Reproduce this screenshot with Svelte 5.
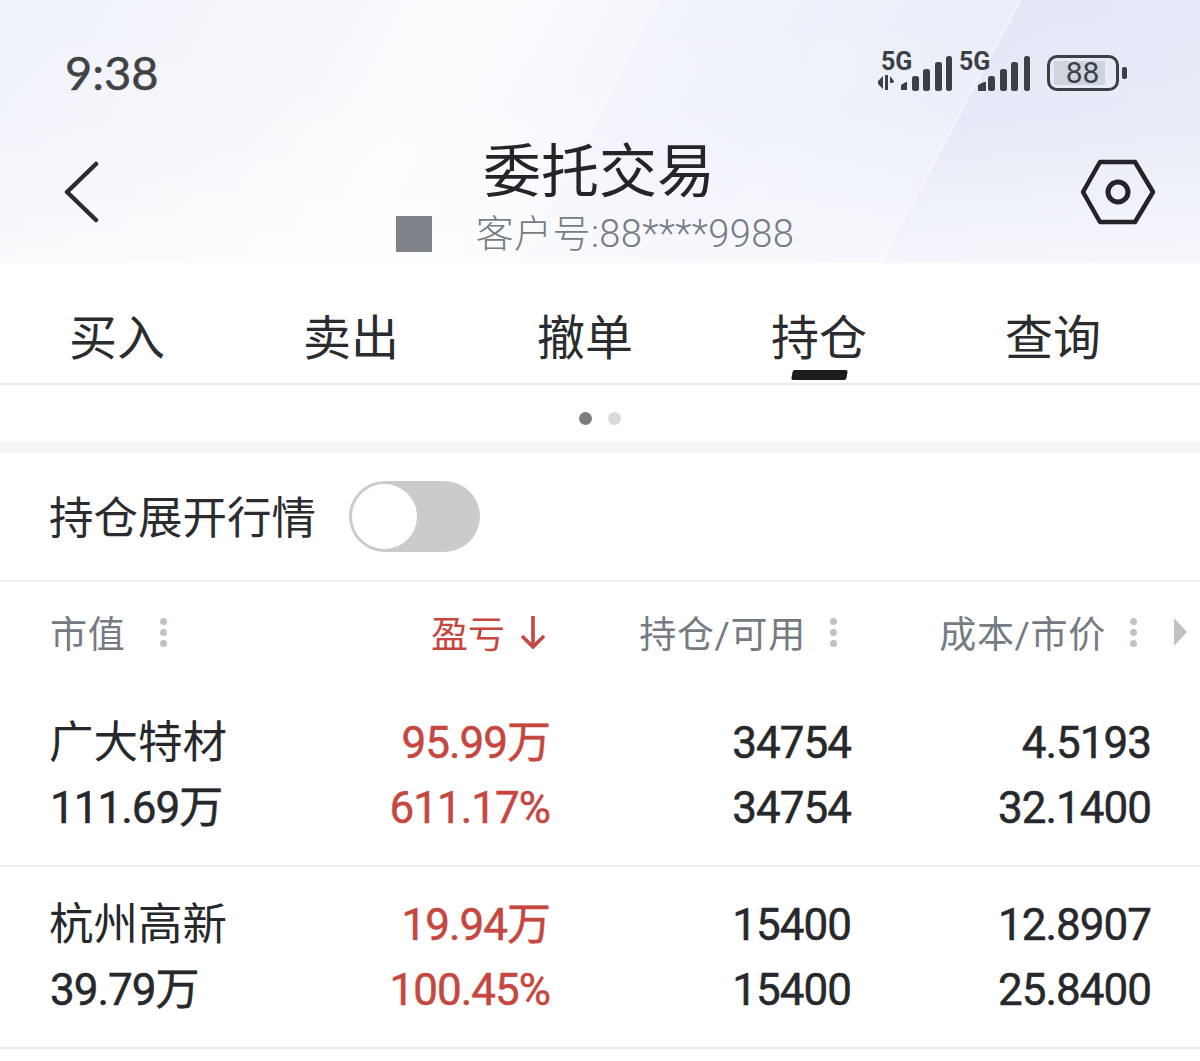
<script>
  const tabs = ['买入', '卖出', '撤单', '持仓', '查询'];
  const rows = [
    { name: '广大特材', value: '111.69万', pl: '95.99万', pct: '611.17%', pos: '34754', avail: '34754', cost: '4.5193', price: '32.1400' },
    { name: '杭州高新', value: '39.79万', pl: '19.94万', pct: '100.45%', pos: '15400', avail: '15400', cost: '12.8907', price: '25.8400' }
  ];
</script>

<div class="page">
  <header class="hero">
    <div class="status">
      <span class="time">9:38</span>
      <div class="status-icons">
        <svg class="sim a" width="78" height="64" viewBox="0 0 78 64">
          <text x="5" y="35" class="fiveg">5G</text>
          <g fill="#3c3f44">
            <path d="M2 47l5-5v13l-5-5zM9 41h3v15H9zM14 42l4 5-1 2h-3z" transform="translate(0 -1)" />
            <path d="M25 50l5-3h1v8h-6z" />
            <rect x="36" y="41" width="7" height="15" rx="2.5" />
            <rect x="47" y="34" width="7" height="22" rx="2.5" />
            <rect x="59" y="27" width="7" height="29" rx="2.5" />
            <rect x="70" y="21" width="6" height="35" rx="2.5" />
          </g>
        </svg>
        <svg class="sim b" width="74" height="64" viewBox="0 0 74 64">
          <text x="1" y="35" class="fiveg">5G</text>
          <g fill="#3c3f44">
            <path d="M20 50l6-3h2v9h-8z" />
            <rect x="30" y="41" width="7" height="15" rx="2.5" />
            <rect x="42" y="34" width="7" height="22" rx="2.5" />
            <rect x="53" y="27" width="7" height="29" rx="2.5" />
            <rect x="66" y="21" width="6" height="35" rx="2.5" />
          </g>
        </svg>
        <div class="battery">
          <div class="cell"><span class="level"></span><span class="pct">88</span></div>
          <span class="nub"></span>
        </div>
      </div>
    </div>

    <div class="nav">
      <svg class="back" width="40" height="64" viewBox="0 0 40 64" fill="none" stroke="#2a2c2f" stroke-width="4.5" stroke-linecap="round" stroke-linejoin="round">
        <path d="M32 3 L3 31 L32 59" />
      </svg>
      <div class="titles">
        <h1>委托交易</h1>
        <div class="account">
          <span class="mask"></span>
          <span>客户号:88****9988</span>
        </div>
      </div>
      <svg class="gear" width="76" height="68" viewBox="0 0 76 68" fill="none" stroke="#222427" stroke-width="4.5">
        <path d="M20 3 H55 L73 33 L55 63 H20 L3 33 Z" stroke-linejoin="round" />
        <circle cx="38" cy="33" r="10" stroke-width="5" />
      </svg>
    </div>
  </header>

  <nav class="tabs">
    {#each tabs as tab, i}
      <div class="tab" class:active={i === 3}>{tab}</div>
    {/each}
  </nav>

  <div class="dots"><span class="dot on"></span><span class="dot"></span></div>

  <div class="toggle-row">
    <span>持仓展开行情</span>
    <div class="switch"><span class="knob"></span></div>
  </div>

  <div class="table-head">
    <div class="hc first"><span>市值</span><span class="more"><i></i><i></i><i></i></span></div>
    <div class="hc sort">
      <span>盈亏</span>
      <svg width="26" height="36" viewBox="0 0 26 36" fill="none" stroke="#c5473f" stroke-width="3.6"><path d="M13 2 V33 M2 22 L13 33 L24 22" /></svg>
    </div>
    <div class="hc"><span>持仓/可用</span><span class="more"><i></i><i></i><i></i></span></div>
    <div class="hc"><span>成本/市价</span><span class="more"><i></i><i></i><i></i></span></div>
    <div class="tri"></div>
  </div>

  {#each rows as r, i}
    <div class="row" class:first={i === 0}>
      <div class="cell-l"><div class="name">{r.name}</div><div class="num">{r.value}</div></div>
      <div class="cell-r red"><div class="num">{r.pl}</div><div class="num">{r.pct}</div></div>
      <div class="cell-r"><div class="num">{r.pos}</div><div class="num">{r.avail}</div></div>
      <div class="cell-r"><div class="num">{r.cost}</div><div class="num">{r.price}</div></div>
    </div>
  {/each}
</div>

<style>
  :global(body) {
    margin: 0;
    background: #fff;
  }
  .page {
    width: 1200px;
    height: 1061px;
    overflow: hidden;
    background: #fff;
    color: #26282b;
    font-family: Roboto, "Noto Sans CJK SC", sans-serif;
  }
  .hero {
    height: 263px;
    box-sizing: border-box;
    padding: 45px 46px 0 64px;
    background:
      linear-gradient(180deg, rgba(255,255,255,0) 0, rgba(255,255,255,.1) 45%, rgba(255,255,255,.6) 100%),
      linear-gradient(118deg, #eef1f9 0, #f6f8fc 25%, #fbfcfe 35%, #f7f8fd 49.2%, #f2f4fb 49.4%, #edf0fa 62.7%, #eef1fa 62.9%, #eaeef9 76%, #f6f7fc 76.1%, #e4e8f6 76.3%, #e8ebf7 100%);
  }
  .status {
    display: flex;
    justify-content: space-between;
    align-items: center;
    height: 56px;
  }
  .time {
    font-family: Lato, Roboto, sans-serif;
    font-size: 47px;
    line-height: 56px;
    font-weight: 400;
    color: #404246;
    -webkit-text-stroke: .5px #404246;
    margin-left: 1px;
    margin-top: -2px;
  }
  .status-icons {
    display: flex;
    align-items: center;
    padding-right: 27px;
  }
  .sim { margin-top: -12px; }
  .sim.a { margin-right: 4px; }
  .sim.b { margin-right: 15px; }
  .fiveg {
    font-family: Roboto, sans-serif;
    font-size: 25px;
    font-weight: 700;
    fill: #3c3f44;
  }
  .battery {
    display: flex;
    align-items: center;
    gap: 3px;
  }
  .cell {
    position: relative;
    width: 72px;
    height: 36px;
    box-sizing: border-box;
    border: 3.5px solid #3c3f44;
    border-radius: 10px;
    display: flex;
    align-items: center;
    justify-content: center;
  }
  .level {
    position: absolute;
    left: 4px;
    top: 3px;
    bottom: 3px;
    width: 51px;
    background: #d0d4de;
  }
  .pct {
    position: relative;
    font-size: 30px;
    line-height: 28px;
    color: #3c3f44;
    margin-right: 1px;
  }
  .nub {
    width: 5px;
    height: 12px;
    border-radius: 2px;
    background: #3c3f44;
  }
  .nav {
    display: grid;
    grid-template-columns: 40px 1fr 76px;
    align-items: start;
    margin-top: 37px;
  }
  .back { margin-top: 23px; }
  .gear { margin-top: 21px; margin-left: 2px; }
  .titles {
    display: flex;
    flex-direction: column;
    align-items: center;
    padding-left: 4px;
  }
  h1 {
    margin: 0;
    padding-left: 12px;
    font-size: 58px;
    line-height: 68px;
    font-weight: 400;
    color: #232528;
  }
  .account {
    display: flex;
    align-items: center;
    gap: 44px;
    font-size: 38px;
    letter-spacing: .4px;
    line-height: 46px;
    color: #757c84;
    font-weight: 300;
    margin-top: 5px;
    padding-left: 4px;
  }
  .mask {
    width: 36px;
    height: 36px;
    background: #7e848a;
  }
  .tabs {
    display: grid;
    grid-template-columns: repeat(5, 234px);
    height: 120px;
    border-bottom: 2px solid #ececee;
    padding-right: 30px;
    box-sizing: content-box;
    width: 1170px;
  }
  .tab {
    font-size: 48px;
    line-height: 50px;
    padding-top: 51px;
    text-align: center;
    color: #2a2c2f;
    position: relative;
  }
  .tab.active::after {
    content: "";
    position: absolute;
    left: 90px;
    top: 107px;
    width: 55px;
    height: 10px;
    background: #1c1c1e;
    transform: skewX(-10deg);
    border-radius: 2px;
  }
  .dots {
    height: 56px;
    box-sizing: border-box;
    padding-top: 10px;
    display: flex;
    justify-content: center;
    align-items: center;
    gap: 16px;
  }
  .dot {
    width: 13px;
    height: 13px;
    border-radius: 50%;
    background: #dadada;
  }
  .dot.on { background: #7d7d7d; }
  .toggle-row {
    height: 139px;
    box-sizing: border-box;
    border-top: 12px solid #f5f5f5;
    padding: 0 0 0 50px;
    display: flex;
    align-items: center;
    gap: 33px;
    font-size: 44.5px;
    color: #2a2c2f;
  }
  .toggle-row > span {
    margin-top: -4px;
    margin-left: -1px;
  }
  .switch {
    width: 131px;
    height: 71px;
    box-sizing: border-box;
    border-radius: 36px;
    background: #cbcbcb;
    padding: 3px;
    position: relative;
  }
  .knob {
    display: block;
    width: 65px;
    height: 65px;
    border-radius: 50%;
    background: #fff;
  }
  .table-head {
    display: grid;
    grid-template-columns: 230px 270px 301px 300px 36px;
    height: 112px;
    box-sizing: border-box;
    border-top: 2px solid #f0f0f0;
    padding: 0 13px 10px 50px;
    align-items: center;
    font-size: 37px;
    letter-spacing: .7px;
    color: #747b82;
    font-weight: 400;
  }
  .hc {
    display: flex;
    justify-content: flex-end;
    align-items: center;
    gap: 24px;
    padding-right: 14px;
  }
  .hc.first {
    justify-content: flex-start;
    gap: 35px;
    padding-right: 0;
  }
  .hc.sort {
    color: #c5473f;
    gap: 15px;
    padding-right: 4px;
    letter-spacing: 0;
  }
  .more {
    display: flex;
    flex-direction: column;
    gap: 4px;
  }
  .more i {
    display: block;
    width: 7px;
    height: 7px;
    border-radius: 50%;
    background: #bfc3c8;
  }
  .tri {
    justify-self: end;
    width: 0;
    height: 0;
    border-left: 13px solid #bcc1c6;
    border-top: 14px solid transparent;
    border-bottom: 14px solid transparent;
  }
  .row {
    display: grid;
    grid-template-columns: 230px 270px 301px 300px;
    height: 182px;
    box-sizing: border-box;
    padding: 26px 49px 0 50px;
    border-bottom: 2px solid #efefef;
    font-size: 44px;
    line-height: 65px;
    color: #26282b;
  }
  .row.first {
    height: 175px;
    padding-top: 19px;
  }
  .name {
    margin-left: -1px;
    font-size: 44.5px;
  }
  .num {
    letter-spacing: -1px;
    font-weight: 400;
    -webkit-text-stroke: .5px currentColor;
  }
  .cell-l { text-align: left; white-space: nowrap; }
  .cell-r { text-align: right; white-space: nowrap; }
  .red { color: #c5473f; }
</style>
